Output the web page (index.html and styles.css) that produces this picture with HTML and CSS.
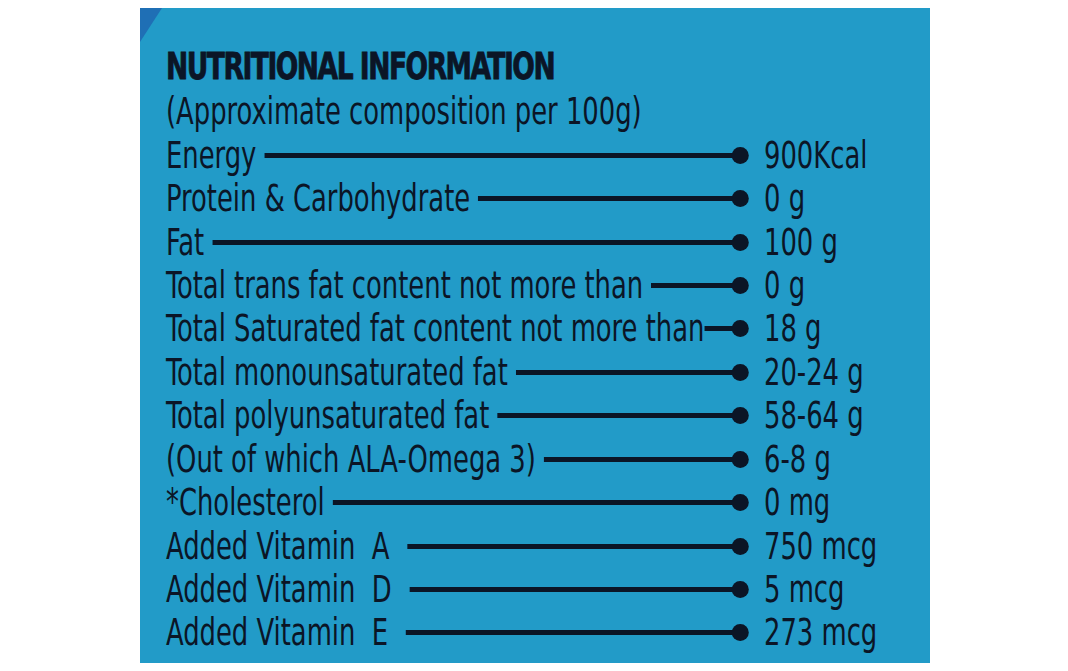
FILE: index.html
```html
<!DOCTYPE html>
<html lang="en">
<head>
  <meta charset="UTF-8">
  <title>Nutritional Information</title>
  <link rel="stylesheet" href="styles.css">
</head>
<body>

  <div class="panel">
    <div class="sheet">
      <h1 class="title">NUTRITIONAL INFORMATION</h1>
      <p class="sub">(Approximate composition per 100g)</p>
      <ul class="facts">
        <li class="fact"><span class="label">Energy</span><span class="rule"></span><span class="dot"></span><span class="value">900Kcal</span></li>
        <li class="fact"><span class="label">Protein &amp; Carbohydrate</span><span class="rule"></span><span class="dot"></span><span class="value">0 g</span></li>
        <li class="fact"><span class="label">Fat</span><span class="rule"></span><span class="dot"></span><span class="value">100 g</span></li>
        <li class="fact"><span class="label">Total trans fat content not more than</span><span class="rule"></span><span class="dot"></span><span class="value">0 g</span></li>
        <li class="fact"><span class="label">Total Saturated fat content not more than</span><span class="rule tight"></span><span class="dot"></span><span class="value">18 g</span></li>
        <li class="fact"><span class="label">Total monounsaturated fat</span><span class="rule"></span><span class="dot"></span><span class="value">20-24 g</span></li>
        <li class="fact"><span class="label">Total polyunsaturated fat</span><span class="rule"></span><span class="dot"></span><span class="value">58-64 g</span></li>
        <li class="fact"><span class="label">(Out of which ALA-Omega 3)</span><span class="rule"></span><span class="dot"></span><span class="value">6-8 g</span></li>
        <li class="fact"><span class="label">*Cholesterol</span><span class="rule"></span><span class="dot"></span><span class="value">0 mg</span></li>
        <li class="fact"><span class="label">Added Vitamin  A</span><span class="rule wide"></span><span class="dot"></span><span class="value">750 mcg</span></li>
        <li class="fact"><span class="label">Added Vitamin  D</span><span class="rule wide"></span><span class="dot"></span><span class="value">5 mcg</span></li>
        <li class="fact"><span class="label">Added Vitamin  E</span><span class="rule wide"></span><span class="dot"></span><span class="value">273 mcg</span></li>
      </ul>
    </div>
  </div>

</body>
</html>
```
FILE: styles.css
```css
body {
  margin: 0;
  background: #ffffff;
  font-family: "DejaVu Sans Condensed", "DejaVu Sans", sans-serif;
  color: #0b1526;
}
.panel {
  --sx: 0.776;
  position: relative;
  width: 790px;
  height: 655px;
  margin: 8px 0 0 140px;
  padding: 36px 0 0 26px;
  box-sizing: border-box;
  background: #229bc8;
  overflow: hidden;
}
.panel::before {
  content: "";
  position: absolute;
  left: 0;
  top: 0;
  width: 22px;
  height: 34px;
  background: #1f6fb5;
  clip-path: polygon(0 0, 100% 0, 0 100%);
}
.sheet {
  width: calc(760px / var(--sx));
  transform: scaleX(var(--sx));
  transform-origin: left top;
}
.title {
  margin: 0 0 2px;
  font-size: 38px;
  line-height: 44px;
  font-weight: bold;
  letter-spacing: -1.9px;
  -webkit-text-stroke: 0.8px currentColor;
}
.sub {
  margin: 0;
  font-size: 37px;
  line-height: 43.45px;
}
.facts {
  list-style: none;
  margin: 0;
  padding: 0;
}
.fact {
  display: flex;
  align-items: center;
  height: 43.45px;
  font-size: 37px;
}
.label {
  white-space: pre;
}
.rule {
  flex: 1;
  height: 5px;
  margin-left: calc(8px / var(--sx));
  background: currentColor;
}
.rule.tight {
  margin-left: 0;
}
.rule.wide {
  margin-left: calc(18px / var(--sx));
}
.dot {
  width: calc(17px / var(--sx));
  height: 17px;
  margin-left: calc(-3px / var(--sx));
  border-radius: 50%;
  background: currentColor;
}
.value {
  width: calc(177px / var(--sx));
  padding-left: calc(15px / var(--sx));
  box-sizing: border-box;
  white-space: nowrap;
}
```
